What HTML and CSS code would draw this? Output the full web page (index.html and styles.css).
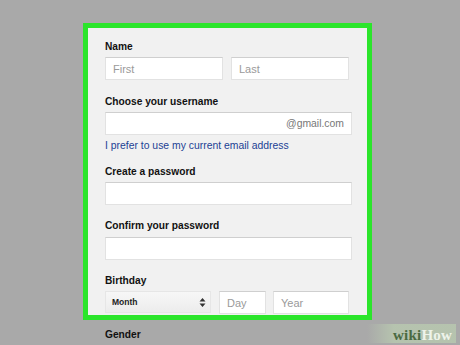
FILE: index.html
```html
<!DOCTYPE html>
<html>
<head>
<meta charset="utf-8">
<link rel="stylesheet" href="styles.css">
</head>
<body>
<div class="stage">
  <div class="card">
    <div class="field f-name">
      <div class="label">Name</div>
      <div class="row">
        <div class="input w-half"><span class="ph">First</span></div>
        <div class="input w-half"><span class="ph">Last</span></div>
      </div>
    </div>
    <div class="field f-user">
      <div class="label">Choose your username</div>
      <div class="input w-full suffix"><span class="sfx">@gmail.com</span></div>
      <a class="link" href="#">I prefer to use my current email address</a>
    </div>
    <div class="field f-pass">
      <div class="label">Create a password</div>
      <div class="input w-full"></div>
    </div>
    <div class="field f-conf">
      <div class="label">Confirm your password</div>
      <div class="input w-full"></div>
    </div>
    <div class="field f-birth">
      <div class="label">Birthday</div>
      <div class="row">
        <div class="select">
          <span>Month</span>
          <svg class="arrows" width="7" height="11" viewBox="0 0 7 11"><path d="M0.5 4.5 L3.5 1 L6.5 4.5 Z M0.5 6.5 L3.5 10 L6.5 6.5 Z" fill="#333"/></svg>
        </div>
        <div class="input w-day"><span class="ph">Day</span></div>
        <div class="input w-year"><span class="ph">Year</span></div>
      </div>
    </div>
  </div>
  <div class="below">Gender</div>
  <div class="logo"><span class="wiki">wiki</span><span class="how">How</span></div>
</div>
</body>
</html>
```
FILE: styles.css
```css
html, body {
  margin: 0;
  padding: 0;
  background: #a9a9a9;
}
body {
  width: 460px;
  height: 345px;
  overflow: hidden;
  font-family: "Liberation Sans", Arial, sans-serif;
}
.stage {
  position: relative;
  width: 460px;
  height: 345px;
  padding: 23px 0 0 83px;
  box-sizing: border-box;
}
.card {
  width: 289px;
  height: 297px;
  box-sizing: border-box;
  border: 5px solid #2be52b;
  background: #f1f1f1;
  padding: 13px 0 0 17px;
  display: flex;
  flex-direction: column;
}
.field {
  display: flex;
  flex-direction: column;
}
.label {
  font-size: 10.2px;
  font-weight: bold;
  color: #111;
  line-height: 12px;
  margin-bottom: 4px;
}
.f-user { margin-top: 16px; }
.f-pass { margin-top: 14px; }
.f-conf { margin-top: 15px; }
.f-conf .label { margin-bottom: 5px; }
.f-birth { margin-top: 15px; }
.row {
  display: flex;
  gap: 8px;
}
.f-birth .row { gap: 0; }
.input {
  height: 23px;
  box-sizing: border-box;
  background: #fff;
  border: 1px solid #e2e2e2;
  border-top-color: #cfcfcf;
  display: flex;
  align-items: center;
  padding: 0 7px;
  font-size: 11px;
}
.w-half { width: 118px; }
.w-full { width: 247px; }
.w-day { width: 47px; margin-left: 8px; }
.w-year { width: 76px; margin-left: 7px; }
.ph { color: #9a9a9a; }
.suffix { justify-content: flex-end; }
.sfx { color: #777; font-size: 10.4px; }
.link {
  font-size: 10.4px;
  color: #1c3f94;
  text-decoration: none;
  margin-top: 5px;
  line-height: 12px;
}
.select {
  width: 106px;
  height: 22px;
  box-sizing: border-box;
  background: linear-gradient(#f7f7f7, #ececec);
  border: 1px solid #e6e6e6;
  display: flex;
  align-items: center;
  justify-content: space-between;
  padding: 0 4px 0 6px;
  font-size: 8.5px;
  font-weight: bold;
  color: #222;
}
.below {
  position: absolute;
  left: 105px;
  top: 329px;
  font-size: 10.2px;
  line-height: 12px;
  font-weight: bold;
  color: #111;
}
.logo {
  position: absolute;
  right: 4px;
  bottom: 2px;
  padding: 3px 4px 0 26px;
  background: linear-gradient(90deg, rgba(180,195,170,0), rgba(183,198,175,0.9) 30%);
  font-family: "Liberation Serif", "DejaVu Serif", serif;
  font-weight: bold;
  font-size: 15px;
  line-height: 16px;
  letter-spacing: 0.2px;
}
.wiki { color: #4a6a42; }
.how { color: #eef3ea; }
```
